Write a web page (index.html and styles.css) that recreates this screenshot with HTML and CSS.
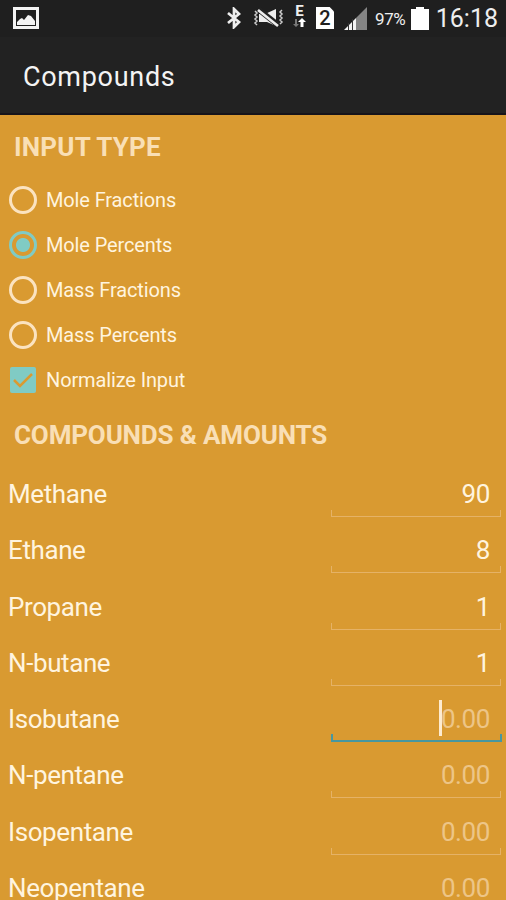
FILE: index.html
```html
<!DOCTYPE html>
<html lang="en">
<head>
<meta charset="utf-8">
<title>Compounds</title>
<link rel="stylesheet" href="styles.css">
</head>
<body>
<div class="status">
  <svg class="picture" width="28" height="24" viewBox="0 0 28 24"><path fill="#f4f4f4" fill-rule="evenodd" d="M1 1h26v22H1zM4 4v16h20V4z"/><path fill="#f4f4f4" d="M5 19v-3l3-3 2-1 2 2 4-5 3 1 4 5v4z"/></svg>
  <svg class="bluetooth" width="16" height="22" viewBox="0 0 16 22"><path fill="none" stroke="#eee" stroke-width="2.700" d="M2 6l11 9-5 5V2l5 5-11 9"/></svg>
  <svg class="mute" width="32" height="22" viewBox="0 0 32 22"><path fill="#eee" d="M6 7l6 0 11-5v17l-9-4H6z"/><path fill="none" stroke="#222" stroke-width="5.500" d="M5 2l20 16"/><path fill="none" stroke="#eee" stroke-width="2.600" d="M5 3l20 16"/><path fill="none" stroke="#ccc" stroke-width="1.500" d="M2 4l2 2-2 2 2 2-2 2 2 2-2 2 2 2M29 3l-2 2 2 2-2 2 2 2-2 2 2 2-2 2"/></svg>
  <span class="data"><b>E</b><svg width="13" height="10" viewBox="0 0 13 10"><path fill="#777" d="M2 1h2v5h2L3 9 0 6h2z"/><path fill="#fff" d="M9 0l4 4h-2.500v5h-3V4H5z"/></svg></span>
  <span class="sim">2</span>
  <svg class="signal" width="24" height="23" viewBox="0 0 24 23"><path fill="#858585" d="M23 0v23H12V11z"/><path fill="#f4f4f4" d="M0 23L12 11v12z"/><path stroke="#333" d="M4.500 16v7M8.500 12v11"/></svg>
  <span class="percent">97%</span>
  <svg class="battery" width="18" height="23" viewBox="0 0 18 23"><path fill="#fff" d="M5 0h8v2h5v21H0V2h5z"/></svg>
  <time>16:18</time>
</div>
<header>Compounds</header>
<main>
  <h2 class="first">INPUT TYPE</h2>
  <div class="options">
    <label><i class="radio"></i>Mole Fractions</label>
    <label><i class="radio on"></i>Mole Percents</label>
    <label><i class="radio"></i>Mass Fractions</label>
    <label><i class="radio"></i>Mass Percents</label>
    <label><svg class="check" width="28" height="26" viewBox="0 0 28 26"><rect x="1" width="26" height="26" rx="2" fill="#80cbc4"/><path fill="none" stroke="#d99a31" stroke-width="2.500" d="M5 13l6 6L23 7"/></svg><span class="text">Normalize Input</span></label>
  </div>
  <h2 class="second">COMPOUNDS &amp; AMOUNTS</h2>
  <div class="rows">
    <div class="row"><span>Methane</span><div class="field">90</div></div>
    <div class="row"><span>Ethane</span><div class="field">8</div></div>
    <div class="row"><span>Propane</span><div class="field">1</div></div>
    <div class="row"><span>N-butane</span><div class="field">1</div></div>
    <div class="row"><span>Isobutane</span><div class="field hint focus"><i class="cursor"></i>0.00</div></div>
    <div class="row"><span>N-pentane</span><div class="field hint">0.00</div></div>
    <div class="row"><span>Isopentane</span><div class="field hint">0.00</div></div>
    <div class="row"><span>Neopentane</span><div class="field hint">0.00</div></div>
  </div>
</main>
</body>
</html>
```
FILE: styles.css
```css
* { box-sizing: border-box; }
html, body { height: 900px; overflow: hidden; }
body { margin: 0; background: #d99a31; color: #fff4df; font-family: Roboto, sans-serif; }
.status { height: 37px; background: #1f1f1f; color: #eee; display: flex; align-items: center; padding: 0 8px 1px 12px; }
.status > * { flex: none; }
.bluetooth { margin-left: 186px; }
.mute { margin-left: 11px; }
.data { width: 13px; margin-left: 8px; display: flex; flex-direction: column; align-items: center; padding-bottom: 3px; }
.data b { font-size: 15px; line-height: 13px; }
.sim { width: 18px; height: 22px; margin-left: 10px; background: #fff; color: #1f1f1f; font-size: 20px; font-weight: 500; line-height: 23px; text-align: center; clip-path: polygon(0 0, 76% 0, 100% 20%, 100% 100%, 0 100%); }
.signal { margin-left: 10px; }
.percent { width: 34px; margin-left: 7px; padding-top: 2px; font-size: 17px; letter-spacing: -.4px; }
.battery { margin-left: 2px; }
time { margin-left: auto; font-size: 25px; line-height: 37px; }
header { height: 78px; padding-left: 23px; background: #222; border-bottom: 2px solid #17141a; font-size: 27px; letter-spacing: .7px; line-height: 80px; color: #f4f4f4; }
h2 { margin: 0; padding-left: 14px; font-size: 26px; line-height: 32px; font-weight: 700; color: #f9dfb5; }
.first { padding-top: 16px; height: 62px; letter-spacing: .2px; }
.options { height: 226px; }
label { display: flex; align-items: center; height: 45px; padding: 1px 0 0 9px; font-size: 20px; letter-spacing: -.13px; }
.radio { width: 28px; height: 28px; margin: -1px 9px 0 0; border: 3px solid #fbe3c0; border-radius: 50%; }
.radio.on { border-color: #80cbc4; background: radial-gradient(circle, #80cbc4 6.500px, transparent 7.500px); }
.check { margin: -1px 9px 0 0; }
.second { padding-top: 16px; height: 63px; letter-spacing: -.15px; }
.row { display: flex; justify-content: space-between; height: 56.25px; padding: 0 5px 0 8px; font-size: 26px; line-height: 57px; white-space: nowrap; }
.row > span { letter-spacing: -.4px; }
.field { position: relative; width: 170px; height: 51px; padding-right: 11px; text-align: right; letter-spacing: -.4px; }
.field::after { content: ""; position: absolute; left: 0; right: 0; bottom: 0; height: 6px; border: 1px solid #e5b266; border-top: 0; }
.hint { color: #edc587; }
.focus::after { left: 0; right: -1px; border: 2px solid #4797a0; border-top: 0; }
.cursor { display: inline-block; width: 3px; height: 36px; margin-right: -1px; background: #fdebd0; vertical-align: -8px; }
```
